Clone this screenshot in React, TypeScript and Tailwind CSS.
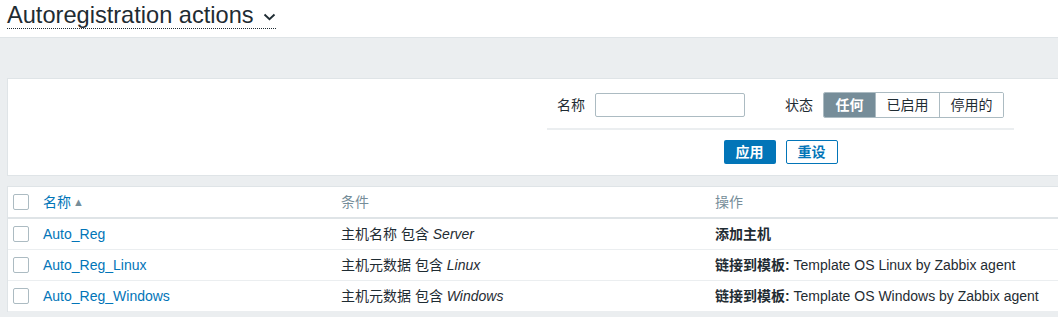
import { useState } from 'react';

const font = { fontFamily: '"Liberation Sans", Arial, "Noto Sans CJK SC", sans-serif' };

type Row = { name: string; cond: string; value: string; op: string; target?: string };

const rows: Row[] = [
    { name: 'Auto_Reg', cond: '主机名称 包含', value: 'Server', op: '添加主机' },
    { name: 'Auto_Reg_Linux', cond: '主机元数据 包含', value: 'Linux', op: '链接到模板:', target: 'Template OS Linux by Zabbix agent' },
    { name: 'Auto_Reg_Windows', cond: '主机元数据 包含', value: 'Windows', op: '链接到模板:', target: 'Template OS Windows by Zabbix agent' },
];

function Checkbox() {
    return <span className="block w-4 h-4 border border-[#acbbc2] rounded-[2px] bg-white" />;
}

export default function App() {
    const [status, setStatus] = useState(0);
    const statuses = ['任何', '已启用', '停用的'];

    return (
        <div style={font} className="w-[1058px] h-[317px] overflow-hidden bg-[#ebeef0] text-[14px] text-[#1f2c33]">
            {/* Header */}
            <div className="h-[38px] bg-white border-b border-[#dfe4e7] pl-[7px] pt-[2px] flex items-start">
                <h1 className="flex items-center text-[23.6px] leading-[26px] border-b border-dotted border-[#1f2c33] text-[#1f2c33]">
                    Autoregistration actions
                    <svg className="ml-[9px] mt-[3px]" width="13" height="8" viewBox="0 0 13 8" fill="none">
                        <path d="M1.5 1.5 L6.5 6.2 L11.5 1.5" stroke="#1f2c33" strokeWidth="1.9" />
                    </svg>
                </h1>
            </div>

            {/* Filter */}
            <div className="mt-[40px] ml-[7px] bg-white border-t border-l border-b border-[#dfe4e7] h-[98px]">
                <div className="ml-[539px] w-[467px]">
                    <div className="h-[51px] border-b-2 border-[#ebeef0] flex items-center pl-[10px] pt-[3px]">
                        <span className="mr-[10px]">名称</span>
                        <input className="w-[150px] h-[24px] border border-[#acbbc2] rounded-[2px] outline-none" />
                        <span className="ml-[40px] mr-[10px]">状态</span>
                        <div className="flex h-[26px] border border-[#acbbc2] rounded-[2px] overflow-hidden">
                            {statuses.map((s, i) => (
                                <button
                                    key={s}
                                    onClick={() => setStatus(i)}
                                    className={
                                        i === status
                                            ? 'w-[51px] bg-[#768d99] text-white font-bold'
                                            : 'w-[64px] bg-white text-[#1f2c33] border-l border-[#acbbc2]'
                                    }
                                >
                                    {s}
                                </button>
                            ))}
                        </div>
                    </div>
                    <div className="flex justify-center gap-[10px] pt-[10px]">
                        <button className="w-[52px] h-[24px] bg-[#0275b8] text-white font-bold rounded-[2px]">应用</button>
                        <button className="w-[52px] h-[24px] bg-white text-[#0275b8] border border-[#0275b8] rounded-[2px] font-bold">重设</button>
                    </div>
                </div>
            </div>

            {/* Table */}
            <div className="mt-[10px] ml-[7px] bg-white border-t border-l border-[#dfe4e7]">
                <div className="grid grid-cols-[30px_298px_374px_1fr] h-[32px] items-center border-b-2 border-[#dfe4e7]">
                    <div className="pl-[5px]"><Checkbox /></div>
                    <div className="pl-[5px] text-[#0275b8] flex items-center">
                        名称<span className="ml-[2px] text-[11px] text-[#768d99]">▲</span>
                    </div>
                    <div className="pl-[5px] text-[#768d99]">条件</div>
                    <div className="pl-[5px] text-[#768d99]">操作</div>
                </div>
                {rows.map((r) => (
                    <div key={r.name} className="grid grid-cols-[30px_298px_374px_1fr] h-[31px] items-center border-b border-[#ebeef0]">
                        <div className="pl-[5px]"><Checkbox /></div>
                        <div className="pl-[5px] text-[#0275b8]">{r.name}</div>
                        <div className="pl-[5px]">
                            {r.cond} <i>{r.value}</i>
                        </div>
                        <div className="pl-[5px]">
                            <b>{r.op}</b>
                            {r.target && <span> {r.target}</span>}
                        </div>
                    </div>
                ))}
            </div>
        </div>
    );
}
